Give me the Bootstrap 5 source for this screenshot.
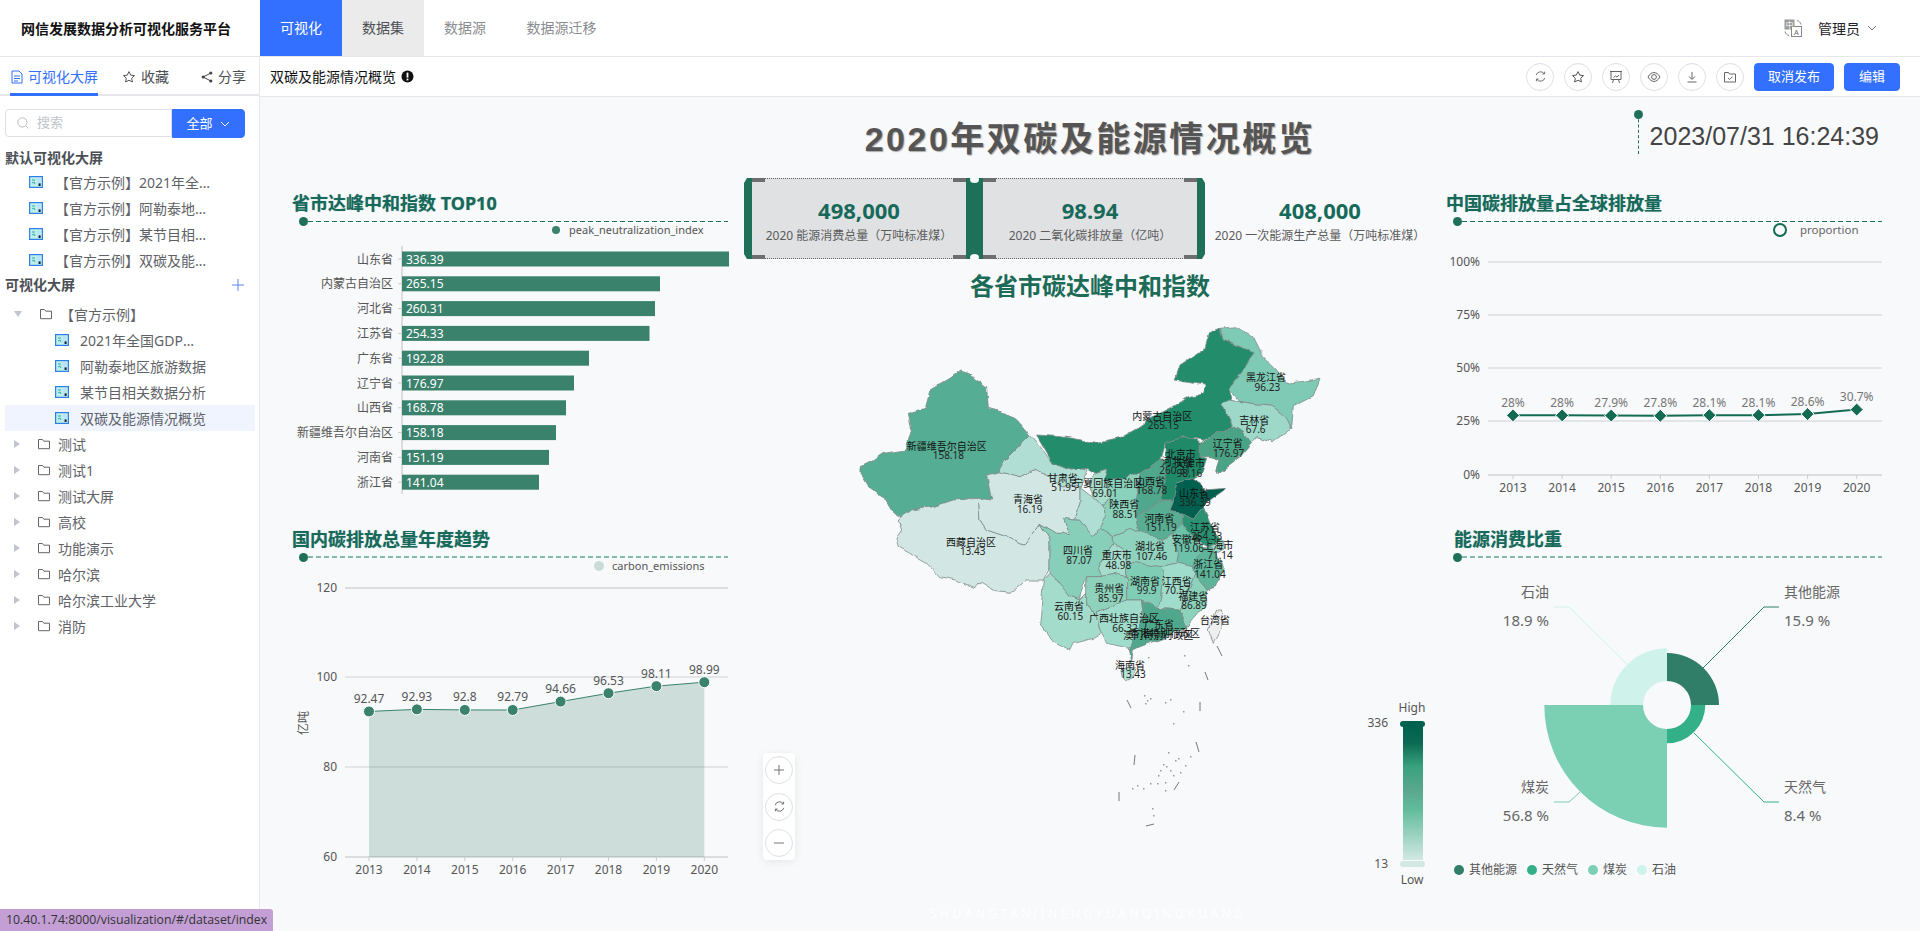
<!DOCTYPE html>
<html lang="zh-CN">
<head>
<meta charset="UTF-8">
<meta name="viewport" content="width=device-width, initial-scale=1">
<title>网信发展数据分析可视化服务平台</title>
<link href="https://cdn.jsdelivr.net/npm/bootstrap@5.3.0/dist/css/bootstrap.min.css" rel="stylesheet">
<style>
  html, body { height: 100%; overflow: hidden; }
  body { font-family: "Noto Sans", "Noto Sans CJK SC", sans-serif; font-size: 14px; color: #1f2329; background: #fff; }
  svg text { font-family: "Noto Sans", "Noto Sans CJK SC", sans-serif; }

  .topbar { height: 57px; border-bottom: 1px solid #e6e7eb; }
  .brand { width: 260px; padding-left: 21px; font-weight: 700; font-size: 14px; color: #111; white-space: nowrap; }
  .top-tab { width: 82px; height: 56px; line-height: 56px; text-align: center; color: #8a8d92; white-space: nowrap; }
  .top-tab.wide { width: 111px; }
  .top-tab.on { background: #3370ff; color: #fff; }
  .top-tab.soft { background: #ebebeb; color: #4b4f55; }
  .user-box { padding-right: 42px; gap: 16px; color: #1f2329; }
  .user-name { gap: 6px; }

  .work { height: 874px; }
  .side { width: 260px; flex: none; border-right: 1px solid #e6e7eb; overflow: hidden; }
  .side-tabs { height: 39px; border-bottom: 2px solid #e6e7eb; padding-left: 10px; }
  .side-tab { height: 39px; display: flex; align-items: center; gap: 5px; color: #4b4f55; white-space: nowrap; }
  .side-tab.on { color: #3370ff; border-bottom: 3px solid #3370ff; padding: 3px 0 0 1px; width: 88px; }
  .search-row { padding: 13px 0 0 5px; }
  .search-box { width: 167px; height: 28px; border: 1px solid #dcdfe6; border-radius: 4px 0 0 4px; color: #c0c4cc; padding-left: 11px; gap: 8px; font-size: 13px; }
  .search-btn { width: 73px; height: 29px; padding: 0; border-radius: 0 4px 4px 0; background: #3370ff; border-color: #3370ff; font-size: 13px; gap: 6px; }
  .group-name { padding-left: 5px; font-weight: 700; color: #4b4f55; }
  .group-a { height: 23px; line-height: 23px; margin-top: 8px; }
  .group-b { height: 20px; line-height: 20px; padding-right: 14px; margin-top: 2px; }
  .tree-row { height: 26px; display: flex; align-items: center; color: #5f6368; white-space: nowrap; }
  .tree-text { overflow: hidden; text-overflow: ellipsis; }
  .lv-default { padding-left: 29px; gap: 12px; }
  .lv-default .tree-text { width: 158px; }
  .lv-folder { padding-left: 14px; }
  .lv-folder .folder-ico { margin: 0 7px 0 17px; }
  .lv-child { padding-left: 55px; gap: 11px; margin-left: 0; }
  .lv-child .tree-text { max-width: 127px; }
  .tree-row.picked { background: #eff4ff; margin: 0 4px 0 5px; padding-left: 50px; }
  .tree-top { margin-top: 6px; }

  .sub-head { height: 40px; border-bottom: 1px solid #e6e7eb; padding: 0 20px 0 10px; }
  .sub-title { color: #111; gap: 5px; }
  .round-btn { width: 28px; height: 28px; border: 1px solid #dee0e6; border-radius: 50%; background: #fff; display: flex; align-items: center; justify-content: center; }
  .act-btn { height: 28px; padding: 0; font-size: 13px; border-radius: 4px; background: #3370ff; border-color: #3370ff; }

  .canvas { background: #f8f9fb; overflow: hidden; height: 834px; }
  .canvas-head { height: 81px; display: grid; grid-template-columns: 1fr auto 1fr; }
  .big-title { font-family: "Liberation Sans", "Noto Sans CJK SC", sans-serif; font-size: 34px; font-weight: 700; letter-spacing: 2.5px; color: #555; line-height: 42px; padding-top: 21px; text-shadow: 1px 1px 1px #aaa; white-space: nowrap; }
  .clock-box { justify-self: end; margin: 17px 41px 0 0; height: 40px; padding: 7px 0 0 11px; position: relative; border-left: 1px dashed #1f7058; font-family: "Liberation Sans", sans-serif; font-size: 25px; line-height: 30px; color: #444; white-space: nowrap; }
  .clock-box::before { content: ""; position: absolute; left: -5px; top: -4px; width: 9px; height: 9px; border-radius: 50%; background: #1f7058; }
  .board { display: grid; grid-template-columns: 480px 690px 490px; }
  .board svg { overflow: visible; }
  .pane-head { height: 35px; padding-top: 12px; box-sizing: content-box; }
  .pane-title { font-size: 18px; font-weight: 700; line-height: 26px; color: #17695a; white-space: nowrap; text-shadow: 0 0 1px rgba(23,105,90,.5); }
  .pane-rule { height: 8px; margin-top: 1px; display: flex; align-items: center; }
  .pane-rule i { width: 9px; height: 9px; border-radius: 50%; background: #1f7058; flex: none; }
  .pane-rule b { flex: 1; height: 1px; background: repeating-linear-gradient(90deg, #1f7058 0 5px, transparent 5px 8px); }
  .pane-rule.pale b { height: 2px; background: repeating-linear-gradient(90deg, #85b9a9 0 5px, transparent 5px 8px); }
  .col-l .pane-title { padding-left: 32px; }
  .col-l .pane-rule { margin-left: 39px; margin-right: 12px; }
  .col-r .pane-title { padding-left: 16px; }
  .col-r .pane-title.in { padding-left: 24px; }
  .col-r .pane-rule { margin-left: 23px; margin-right: 38px; }
  .pane-head.second { padding-top: 0; }
  .col-l svg, .col-r svg, .map-area svg.map-svg { display: block; }

  .ticket { display: flex; height: 81px; margin-left: 4px; }
  .tk-edge { flex: none; width: 8px; background: #1f7058; clip-path: polygon(3px 0, 100% 0, 100% 100%, 3px 100%, 0 calc(100% - 5px), 0 5px); }
  .tk-edge.right { clip-path: polygon(0 0, 5px 0, 100% 5px, 100% calc(100% - 5px), 5px 100%, 0 100%); }
  .tk-gap { flex: none; width: 17px; background: #1f7058; position: relative; }
  .tk-gap::before, .tk-gap::after { content: ""; position: absolute; left: 4px; width: 9px; height: 7px; background: #f8f9fb; border-radius: 50%; }
  .tk-gap::before { top: -2px; }
  .tk-gap::after { bottom: -2px; }
  .tk-cell { flex: none; width: 214px; text-align: center; position: relative; padding-top: 15px; }
  .tk-cell.fill { background: #e0e1e3; border-top: 1px dotted #666; border-bottom: 1px dotted #666; padding-top: 14px; }
  .tk-cell.fill::before, .tk-cell.fill::after { content: ""; position: absolute; top: -1px; height: 4px; width: 13px; left: 0; background: #6e6e6e; box-shadow: 201px 0 #6e6e6e; }
  .tk-cell.fill::after { top: auto; bottom: -1px; }
  .tk-cell.last { width: 230px; }
  .tk-num { font-size: 22px; font-weight: 700; line-height: 34px; color: #17695a; }
  .tk-lab { font-size: 12px; line-height: 18px; color: #5b5b5b; white-space: nowrap; }
  .map-title { font-size: 24px; font-weight: 700; line-height: 32px; margin-top: 11px; padding-left: 10px; text-align: center; color: #1b6b56; }
  .map-area { position: relative; height: 629px; }
  .zoom-tool { position: absolute; left: 23px; top: 451px; width: 32px; height: 107px; border-radius: 4px; background: #fff; box-shadow: 0 2px 8px rgba(0,0,0,.08); display: flex; flex-direction: column; align-items: center; justify-content: space-between; padding: 3px 0; }
  .addr-tip { position: absolute; left: 0; bottom: 0; height: 22px; line-height: 22px; padding: 0 6px; background: #c39fd6; color: #333; font-family: "Open Sans", sans-serif; font-size: 12.3px; border-radius: 0 3px 0 0; white-space: nowrap; }
</style>
</head>
<body class="position-relative">

<svg width="0" height="0" class="position-absolute">
  <symbol id="ic-folder" viewBox="0 0 14 14"><path d="M1.5 2.5h4l1.3 1.7h5.7v7.5h-11z" fill="none" stroke="#666" stroke-width="1"/></symbol>
  <symbol id="ic-screen" viewBox="0 0 14 12"><rect x=".6" y=".6" width="12.8" height="10.8" fill="#bdeee9" stroke="#2f7fe8" stroke-width="1.2"/><path d="M3 4h3M3 7l2-1 1 2" stroke="#3aa" fill="none"/><rect x="8" y="2" width="3.6" height="8" fill="#b9e4f7"/><rect x="9.6" y="7.4" width="2" height="2.6" fill="#123"/></symbol>
  <symbol id="ic-sync" viewBox="0 0 14 14"><path d="M2.4 5.5A4.8 4.8 0 0 1 11 4M11.6 8.5A4.8 4.8 0 0 1 3 10M11.4 1.8V4.2H9M2.6 12.2V9.8H5" fill="none" stroke="#666" stroke-width="1"/></symbol>
  <symbol id="ic-star" viewBox="0 0 14 14"><path d="M7 1.6l1.7 3.5 3.8.5-2.8 2.6.7 3.8L7 10.2 3.6 12l.7-3.8L1.5 5.6l3.8-.5z" fill="none" stroke="#555" stroke-width="1"/></symbol>
  <symbol id="ic-plus" viewBox="0 0 14 14"><path d="M7 2v10M2 7h10" stroke="#777" fill="none"/></symbol>
  <symbol id="ic-minus" viewBox="0 0 14 14"><path d="M2 7h10" stroke="#777" fill="none"/></symbol>
  <symbol id="ic-down" viewBox="0 0 12 12"><path d="M2 4l4 4 4-4" fill="none" stroke="currentColor" stroke-width="1"/></symbol>
</svg>

<header class="topbar d-flex align-items-center">
  <div class="brand">网信发展数据分析可视化服务平台</div>
  <div class="top-tab on">可视化</div>
  <div class="top-tab soft">数据集</div>
  <div class="top-tab">数据源</div>
  <div class="top-tab wide">数据源迁移</div>
  <div class="user-box ms-auto d-flex align-items-center">
    <svg width="18" height="18" viewBox="0 0 18 18"><rect x="0.500" y="0.500" width="10" height="10" fill="#9a9a9a"/><rect x="7.500" y="7.500" width="10" height="10" fill="#fff" stroke="#888"/><text x="5.500" y="8.500" font-size="8" fill="#fff" text-anchor="middle">中</text><text x="12.500" y="15.800" font-size="7.500" fill="#666" text-anchor="middle">A</text><path d="M13 1.500c2 .5 3.500 2 4 4M1 12.500c.5 2 2 3.500 4 4" fill="none" stroke="#888"/></svg>
    <span class="user-name d-flex align-items-center">管理员 <svg width="12" height="12" class="text-secondary"><use href="#ic-down"/></svg></span>
  </div>
</header>

<div class="work d-flex">
  <aside class="side">
    <div class="side-tabs d-flex">
      <div class="side-tab on">
        <svg width="12" height="14" viewBox="0 0 12 14"><path d="M1 1h7l3 3v9H1zM3 6h6M3 8.5h6M3 11h4" fill="none" stroke="#3370ff"/></svg>
        可视化大屏</div>
      <div class="side-tab ms-4"><svg width="14" height="14"><use href="#ic-star"/></svg>收藏</div>
      <div class="side-tab ms-4 ps-2"><svg width="12" height="12" viewBox="0 0 12 12"><circle cx="2.2" cy="6" r="1.6" fill="#444"/><circle cx="9.8" cy="2" r="1.6" fill="#444"/><circle cx="9.8" cy="10" r="1.6" fill="#444"/><path d="M2.2 6l7.6-4M2.2 6l7.6 4" stroke="#444"/></svg>分享</div>
    </div>
    <div class="search-row d-flex">
      <div class="search-box d-flex align-items-center">
        <svg width="12" height="12" viewBox="0 0 12 12"><circle cx="5.4" cy="5.4" r="4.6" fill="none" stroke="#bbb"/><path d="M9 9l2.4 2.4" stroke="#bbb"/></svg>搜索</div>
      <button class="btn btn-primary search-btn d-flex align-items-center justify-content-center">全部 <svg width="12" height="12"><use href="#ic-down"/></svg></button>
    </div>
    <div class="group-name group-a">默认可视化大屏</div>
    <div id="defaultList"></div>
    <div class="group-name group-b d-flex justify-content-between align-items-center">可视化大屏 <svg width="14" height="14" viewBox="0 0 14 14"><path d="M7 1v12M1 7h12" stroke="#5b86f0" fill="none"/></svg></div>
    <div id="treeList" class="tree-top"></div>
  </aside>

  <main class="flex-grow-1">
    <div class="sub-head d-flex align-items-center">
      <div class="sub-title d-flex align-items-center">双碳及能源情况概览
        <svg width="13" height="13" viewBox="0 0 13 13"><circle cx="6.5" cy="6.5" r="6" fill="#111"/><rect x="5.6" y="2.6" width="1.8" height="5" fill="#fff"/><rect x="5.6" y="8.6" width="1.8" height="1.8" fill="#fff"/></svg>
      </div>
      <div class="ms-auto d-flex align-items-center">
        <div class="d-flex" style="gap:10px">
          <div class="round-btn"><svg width="13" height="13"><use href="#ic-sync"/></svg></div>
          <div class="round-btn"><svg width="14" height="14"><use href="#ic-star"/></svg></div>
          <div class="round-btn"><svg width="14" height="14" viewBox="0 0 14 14"><path d="M1 1.500h12M2 1.500v8h10v-8M4.500 9.500l-1 3.500M9.500 9.500l1 3.500M4.500 7.500l2-1.500 1.500 1 2-2" fill="none" stroke="#666"/></svg></div>
          <div class="round-btn"><svg width="14" height="14" viewBox="0 0 14 14"><path d="M1 7c2-3.400 4-4.400 6-4.400S11 3.600 13 7c-2 3.400-4 4.400-6 4.400S3 10.400 1 7z" fill="none" stroke="#666"/><circle cx="7" cy="7" r="2.400" fill="none" stroke="#666"/></svg></div>
          <div class="round-btn"><svg width="14" height="14" viewBox="0 0 14 14"><path d="M7 2v7M4 6.500l3 3 3-3M2.500 12h9" fill="none" stroke="#666"/></svg></div>
          <div class="round-btn"><svg width="14" height="14" viewBox="0 0 14 14"><path d="M1.500 2.500h4l1 1.500h6v8h-11z" fill="none" stroke="#666"/><path d="M5 8l1.500 1.500L9.500 6.800" fill="none" stroke="#666"/></svg></div>
        </div>
        <button class="btn btn-primary act-btn" style="width:80px;margin-left:10px">取消发布</button>
        <button class="btn btn-primary act-btn" style="width:56px;margin-left:10px">编辑</button>
      </div>
    </div>

    <div class="canvas">
      <div class="canvas-head">
        <div></div>
        <div class="big-title">2020年双碳及能源情况概览</div>
        <div class="clock-box">2023/07/31 16:24:39</div>
      </div>
      <div class="board">
        <section class="col-l">
          <div class="pane-head">
            <div class="pane-title">省市达峰中和指数 TOP10</div>
            <div class="pane-rule"><i></i><b></b></div>
          </div>
          <svg id="barChart" width="480" height="301" viewBox="260 225 480 301"></svg>
          <div class="pane-head second">
            <div class="pane-title">国内碳排放总量年度趋势</div>
            <div class="pane-rule pale"><i></i><b></b></div>
          </div>
          <svg id="areaChart" width="480" height="340" viewBox="260 561 480 340"></svg>
        </section>

        <section>
          <div class="ticket">
            <div class="tk-edge"></div>
            <div class="tk-cell fill"><div class="tk-num">498,000</div><div class="tk-lab">2020 能源消费总量（万吨标准煤）</div></div>
            <div class="tk-gap"></div>
            <div class="tk-cell fill"><div class="tk-num">98.94</div><div class="tk-lab">2020 二氧化碳排放量（亿吨）</div></div>
            <div class="tk-edge right"></div>
            <div class="tk-cell last"><div class="tk-num">408,000</div><div class="tk-lab">2020 一次能源生产总量（万吨标准煤）</div></div>
          </div>
          <div class="map-title">各省市碳达峰中和指数</div>
          <div class="map-area">
            <svg id="mapChart" class="map-svg" width="690" height="629" viewBox="740 302 690 629"></svg>
            <div class="zoom-tool">
              <div class="round-btn"><svg width="14" height="14"><use href="#ic-plus"/></svg></div>
              <div class="round-btn"><svg width="13" height="13"><use href="#ic-sync"/></svg></div>
              <div class="round-btn"><svg width="14" height="14"><use href="#ic-minus"/></svg></div>
            </div>
          </div>
        </section>

        <section class="col-r">
          <div class="pane-head">
            <div class="pane-title">中国碳排放量占全球排放量</div>
            <div class="pane-rule"><i></i><b></b></div>
          </div>
          <svg id="shareChart" width="490" height="301" viewBox="1430 225 490 301"></svg>
          <div class="pane-head second">
            <div class="pane-title in">能源消费比重</div>
            <div class="pane-rule pale"><i></i><b></b></div>
          </div>
          <svg id="roseChart" width="490" height="340" viewBox="1430 561 490 340"></svg>
        </section>
      </div>
    </div>
  </main>
</div>

<div class="addr-tip">10.40.1.74:8000/visualization/#/dataset/index</div>

<script>
  // 左侧目录
  const screenIco = '<svg width="14" height="12" class="flex-none"><use href="#ic-screen"/></svg>';
  const folderIco = '<svg width="14" height="14" class="folder-ico flex-none"><use href="#ic-folder"/></svg>';
  const arrowRight = '<svg width="6" height="8" viewBox="0 0 6 8"><path d="M0 0l6 4-6 4z" fill="#c0c4cc"/></svg>';
  const arrowDown = '<svg width="8" height="6" viewBox="0 0 8 6"><path d="M0 0h8L4 6z" fill="#c0c4cc"/></svg>';

  document.getElementById('defaultList').innerHTML = ['2021年全国GDP数据', '阿勒泰地区旅游数据', '某节目相关数据分析', '双碳及能源情况概览']
    .map(t => `<div class="tree-row lv-default">${screenIco}<span class="tree-text">【官方示例】${t}</span></div>`).join('');

  const folderRow = (t, open) => `<div class="tree-row lv-folder">${open ? arrowDown : arrowRight}${folderIco}<span>${t}</span></div>`;
  const childRow = (t, on) => `<div class="tree-row lv-child ${on ? 'picked' : ''}">${screenIco}<span class="tree-text">${t}</span></div>`;
  document.getElementById('treeList').innerHTML = folderRow('【官方示例】', true)
    + ['2021年全国GDP数据', '阿勒泰地区旅游数据', '某节目相关数据分析'].map(t => childRow(t)).join('')
    + childRow('双碳及能源情况概览', true)
    + ['测试', '测试1', '测试大屏', '高校', '功能演示', '哈尔滨', '哈尔滨工业大学', '消防'].map(t => folderRow(t)).join('');

  // svg 小工具
  const txt = (x, y, s, size, fill, anchor, extra) =>
    `<text x="${x}" y="${y}" font-size="${size}" fill="${fill}" text-anchor="${anchor || 'start'}" dominant-baseline="central" ${extra || ''}>${s}</text>`;
  const ln = (x1, y1, x2, y2, c, w) => `<line x1="${x1}" y1="${y1}" x2="${x2}" y2="${y2}" stroke="${c}" stroke-width="${w || 1}"/>`;

  // 柱状图
  const bars = [['山东省', 336.39, 729], ['内蒙古自治区', 265.15, 660], ['河北省', 260.31, 655], ['江苏省', 254.33, 649.500], ['广东省', 192.28, 589],
    ['辽宁省', 176.97, 574], ['山西省', 168.78, 566], ['新疆维吾尔自治区', 158.18, 556], ['河南省', 151.19, 549], ['浙江省', 141.04, 539]];
  let h = `<circle cx="556" cy="230" r="4" fill="#3a826c"/>` + txt(569, 229, 'peak_neutralization_index', 11, '#555');
  h += ln(402, 246, 402, 494, '#dcdcdc', 2);
  bars.forEach((b, i) => {
    const y = 259 + i * 24.8;
    h += ln(398, y, 402, y, '#ccc');
    h += txt(393, y, b[0], 12, '#555', 'end');
    h += `<rect x="402" y="${y - 7.5}" width="${b[2] - 402}" height="15" fill="#3a826c"/>`;
    h += txt(406, y, b[1], 12, '#fff');
  });
  document.getElementById('barChart').innerHTML = h;

  // 面积折线图
  const years = [2013, 2014, 2015, 2016, 2017, 2018, 2019, 2020];
  const carbon = [92.47, 92.93, 92.8, 92.79, 94.66, 96.53, 98.11, 98.99];
  const ax = i => 369 + i * 47.9, ay = v => 857 - (v - 60) / 60 * 269;
  h = `<circle cx="599" cy="566" r="5" fill="#cbdcd8"/>` + txt(612, 565, 'carbon_emissions', 11, '#555');
  [[120, 588], [100, 677], [80, 767], [60, 857]].forEach(t => {
    h += ln(345, t[1], 728, t[1], t[0] === 120 || t[0] === 60 ? '#dcdde0' : '#cfd1d3', t[0] === 100 || t[0] === 80 ? 1 : 2);
    h += txt(337, t[1] - 1, t[0], 12, '#555', 'end');
  });
  const pts = carbon.map((v, i) => ax(i) + ',' + ay(v)).join(' ');
  h += `<polygon points="${ax(0)},857 ${pts} ${ax(7)},857" fill="#1f7058" fill-opacity=".2"/>`;
  h += `<polyline points="${pts}" fill="none" stroke="#3a826c" stroke-width="1"/>`;
  carbon.forEach((v, i) => {
    h += `<circle cx="${ax(i)}" cy="${ay(v)}" r="5.500" fill="#3a826c" stroke="#fff"/>`;
    h += txt(ax(i), ay(v) - 13, v, 12, '#555', 'middle');
    h += ln(ax(i), 857, ax(i), 861, '#ccc');
    h += txt(ax(i), 869, years[i], 12, '#555', 'middle');
  });
  h += txt(303, 723, '亿吨', 12, '#555', 'middle', 'transform="rotate(-90 303 723)"');
  document.getElementById('areaChart').innerHTML = h;

  // 占比折线图
  const share = [28, 28, 27.9, 27.8, 28.1, 28.1, 28.6, 30.7];
  const sx = i => 1513 + i * 49.1, sy = v => 475 - v * 2.13;
  h = `<circle cx="1780" cy="230" r="6" fill="none" stroke="#136b53" stroke-width="2"/>` + txt(1800, 229, 'proportion', 11.5, '#666');
  [[100, 262], [75, 315], [50, 368], [25, 421], [0, 475]].forEach(t => {
    h += ln(1488, t[1], 1882, t[1], t[0] === 50 ? '#cfd1d6' : '#dcdde0', t[0] === 50 ? 1 : (t[0] === 0 ? 2 : 1.500));
    h += txt(1480, t[1] - 1, t[0] + '%', 12, '#555', 'end');
  });
  h += `<polyline points="${share.map((v, i) => sx(i) + ',' + sy(v)).join(' ')}" fill="none" stroke="#136b53" stroke-width="2"/>`;
  share.forEach((v, i) => {
    const x = sx(i), y = sy(v);
    h += `<polygon points="${x},${y - 6.500} ${x + 6.500},${y} ${x},${y + 6.500} ${x - 6.500},${y}" fill="#136b53" stroke="#fff"/>`;
    h += txt(x, y - 13, v + '%', 12, '#777', 'middle');
    h += ln(x, 475, x, 479, '#ccc');
    h += txt(x, 487, years[i], 12, '#555', 'middle');
  });
  document.getElementById('shareChart').innerHTML = h;

  // 南丁格尔玫瑰图
  const cx = 1667, cy = 705, inner = 24;
  const sector = (r, q, c) => {
    const d = [[0, -1, 1, 0], [1, 0, 0, 1], [0, 1, -1, 0], [-1, 0, 0, -1]][q];
    return `<path d="M${cx + d[0] * r} ${cy + d[1] * r}A${r} ${r} 0 0 1 ${cx + d[2] * r} ${cy + d[3] * r}L${cx + d[2] * inner} ${cy + d[3] * inner}A${inner} ${inner} 0 0 0 ${cx + d[0] * inner} ${cy + d[1] * inner}Z" fill="${c}"/>`;
  };
  h = sector(52, 0, '#307e68') + sector(38.300, 1, '#34b088') + sector(122.700, 2, '#7bcfb2') + sector(56.700, 3, '#cff3ea');
  const leader = (p, c) => `<polyline points="${p}" fill="none" stroke="${c}"/>`;
  h += leader('1703,668 1764,607 1779,607', '#307e68') + leader('1694,733 1764,802 1779,802', '#34b088')
    + leader('1580,792 1569,802 1554,802', '#7bcfb2') + leader('1627,664 1569,607 1554,607', '#cff3ea');
  [[1549, 591, '石油', '18.9 %', 'end'], [1784, 591, '其他能源', '15.9 %', 'start'], [1549, 786, '煤炭', '56.8 %', 'end'], [1784, 786, '天然气', '8.4 %', 'start']]
    .forEach(l => { h += txt(l[0], l[1], l[2], 14, '#666', l[4]) + txt(l[0], l[1] + 29, l[3], 15, '#666', l[4]); });
  [[1459, '#307e68', '其他能源'], [1532, '#34b088', '天然气'], [1593, '#7bcfb2', '煤炭'], [1642, '#cff3ea', '石油']]
    .forEach(l => { h += `<circle cx="${l[0]}" cy="870" r="5" fill="${l[1]}"/>` + txt(l[0] + 10, 869, l[2], 12, '#555'); });
  document.getElementById('roseChart').innerHTML = h;

  // 中国地图，坐标按参考图描出来的，原点 (840,310)，放大 3 倍
  const provinces = [
    ['#55ae93', '60,470 100,450 130,430 195,420 215,360 205,310 255,295 270,240 330,205 360,183 385,190 440,230 445,295 500,310 540,340 570,375 545,400 490,455 480,485 440,495 455,570 400,565 340,570 280,590 215,600 185,625 160,610 130,560 85,530 60,490'],
    ['#d2e7e3', '175,630 215,600 280,590 340,570 415,565 420,630 440,660 500,680 550,705 600,640 630,690 630,770 610,810 560,810 510,850 470,845 420,815 405,835 350,810 300,800 260,760 175,710 168,685 185,660'],
    ['#d2e7e3', '415,565 455,570 440,495 480,485 540,500 580,480 630,500 670,530 720,530 720,580 700,630 670,625 690,670 650,670 600,640 550,705 500,680 440,660 420,630'],
    ['#b0ded4', '570,375 600,410 640,460 690,480 745,475 720,530 760,560 790,590 800,620 785,650 760,680 715,630 700,630 720,580 720,530 670,530 630,500 580,480 540,500 480,485 490,455 545,400'],
    ['#228c6b', '590,375 660,380 700,385 770,400 840,385 900,350 940,320 1000,290 1040,265 1090,250 1100,225 1060,220 1005,210 1020,165 1090,120 1105,70 1140,55 1150,90 1200,110 1240,125 1215,175 1165,235 1175,275 1145,280 1180,350 1130,370 1090,390 1060,385 1030,380 975,400 960,450 900,490 870,490 850,510 790,510 800,480 770,490 745,475 690,480 640,460'],
    ['#7ecab4', '1140,55 1190,50 1240,80 1270,140 1310,180 1340,220 1380,215 1440,205 1420,260 1360,290 1355,355 1340,325 1300,290 1200,275 1165,235 1215,175 1240,125 1200,110 1150,90'],
    ['#9dd8c8', '1145,280 1165,270 1200,275 1300,290 1340,325 1355,355 1300,395 1250,380 1235,395 1205,365 1180,350'],
    ['#4ba385', '1180,350 1205,365 1235,400 1200,440 1135,490 1130,480 1140,450 1110,440 1080,440 1080,400 1130,370'],
    ['#1f8968', '975,400 1030,380 1060,385 1080,400 1080,440 1100,445 1085,490 1060,505 1010,520 1000,570 960,570 975,520 975,450'],
    ['#50a88c', '900,490 960,450 975,450 975,520 960,570 890,620 890,560'],
    ['#a8dccd', '770,490 800,480 790,510 810,560 790,590 760,560 745,520'],
    ['#8ad2bb', '870,490 900,490 890,560 890,620 900,660 870,660 820,680 780,655 800,620 790,590 810,560 790,510 850,510'],
    ['#005f4e', '1010,520 1060,505 1085,520 1090,540 1160,535 1110,570 1090,590 1060,625 1030,610 990,605 1000,570'],
    ['#58ad92', '960,570 1000,570 990,605 1030,610 1030,640 1000,670 960,690 900,665 890,620'],
    ['#2b9171', '1030,610 1060,625 1090,590 1110,640 1145,690 1110,710 1070,690 1040,660 1030,640'],
    ['#6cc2a8', '1030,640 1040,660 1070,690 1090,710 1060,770 1010,760 1015,730 995,680 1000,670'],
    ['#9fdbc9', '1110,710 1145,690 1155,715 1130,730'],
    ['#5db498', '1090,710 1110,710 1130,730 1150,770 1130,830 1100,840 1065,790 1060,770'],
    ['#8fd2bd', '870,660 900,660 960,690 1000,670 995,680 1015,730 1010,760 960,770 860,755 850,720 820,700 820,680'],
    ['#a6dccc', '775,775 790,740 820,700 850,720 860,755 860,800 820,790 785,800'],
    ['#87cfb8', '600,640 650,670 690,670 670,625 700,630 715,630 760,680 780,655 820,680 820,700 790,740 775,775 785,800 740,800 720,870 690,860 650,810 630,790 630,690'],
    ['#a4dccc', '630,790 650,810 690,860 720,870 740,850 740,880 770,920 780,960 800,960 760,985 700,1000 690,1020 635,990 600,940 610,810'],
    ['#8ed2bc', '740,800 785,800 820,790 860,800 860,870 810,890 770,905 770,920 740,880 740,850'],
    ['#7fcdb4', '860,755 960,770 970,790 965,870 950,895 905,870 860,870 860,800'],
    ['#a0dccb', '960,770 1010,760 1060,770 1065,790 1050,830 1020,900 950,895 965,870 970,790'],
    ['#8cd2bb', '1065,790 1100,840 1100,880 1040,950 1020,900 1050,830'],
    ['#a0dccb', '770,920 770,905 810,890 860,870 905,870 910,920 890,970 870,1015 800,1000 780,960'],
    ['#50a88c', '905,870 950,895 1020,900 1040,950 970,985 900,1010 880,1020 875,1050 868,1020 890,970 910,920'],
    ['#b4e0d5', '843,1080 870,1072 887,1078 880,1102 860,1112 846,1100'],
    ['#eeeeee', '1130,900 1145,900 1145,950 1120,1000 1105,960']
  ];
  const labels = [
    ['新疆维吾尔自治区', 320, 407, '158.18', 325, 435], ['内蒙古自治区', 967, 317, '265.15', 970, 345], ['黑龙江省', 1278, 201, '96.23', 1282, 231],
    ['吉林省', 1243, 330, '67.6', 1247, 357], ['辽宁省', 1163, 400, '176.97', 1166, 428], ['北京市', 1022, 433, '', 0, 0],
    ['河北省', 1010, 453, '260.31', 1005, 480], ['天津市', 1050, 460, '98.16', 1048, 490], ['山西省', 930, 513, '168.78', 935, 540],
    ['山东省', 1062, 548, '336.39', 1065, 576], ['甘肃省', 668, 503, '51.95', 672, 531], ['宁夏回族自治区', 805, 519, '69.01', 795, 548],
    ['青海省', 564, 568, '16.19', 569, 596], ['陕西省', 853, 583, '88.51', 856, 612], ['河南省', 958, 623, '151.19', 963, 652],
    ['江苏省', 1095, 650, '254.33', 1100, 678], ['安徽省', 1040, 686, '119.06', 1045, 714], ['上海市', 1135, 706, '71.14', 1140, 736],
    ['西藏自治区', 393, 695, '13.43', 398, 723], ['四川省', 714, 721, '87.07', 717, 750], ['重庆市', 830, 736, '48.98', 835, 765],
    ['湖北省', 930, 709, '107.46', 935, 738], ['浙江省', 1105, 763, '141.04', 1110, 792], ['湖南省', 915, 812, '99.9', 920, 840],
    ['江西省', 1010, 812, '70.57', 1012, 840], ['贵州省', 808, 835, '85.97', 812, 864], ['福建省', 1060, 857, '86.89', 1062, 885],
    ['云南省', 687, 889, '60.15', 691, 918], ['广西壮族自治区', 852, 925, '66.32', 855, 953], ['广东省', 957, 942, '', 0, 0],
    ['香港特别行政区', 975, 968, '', 0, 0], ['澳门特别行政区', 955, 974, '', 0, 0], ['台湾省', 1125, 930, '', 0, 0],
    ['海南省', 870, 1064, '13.43', 879, 1092]
  ];
  const mx = v => 840 + v / 3, my = v => 310 + v / 3;
  // 轮廓描得比较粗，加一点扰动让边界不那么直
  h = `<defs><filter id="rough" x="-5%" y="-5%" width="110%" height="110%" color-interpolation-filters="sRGB"><feTurbulence type="fractalNoise" baseFrequency=".09" numOctaves="2" seed="4"/><feDisplacementMap in="SourceGraphic" scale="5" xChannelSelector="R" yChannelSelector="G"/></filter></defs>`;
  h += '<g filter="url(#rough)">' + provinces.map(p => `<polygon points="${p[1].split(' ').map(q => { const a = q.split(','); return mx(+a[0]) + ',' + my(+a[1]); }).join(' ')}" fill="${p[0]}" stroke="#7f8a87" stroke-width=".8" stroke-linejoin="round"/>`).join('') + '</g>';
  labels.forEach(l => {
    h += txt(mx(l[1]), my(l[2]), l[0], 10, '#111', 'middle');
    if (l[3]) h += txt(mx(l[4]), my(l[5]), l[3], 10, '#222', 'middle');
  });
  // 南海诸岛的断续线和小岛
  [[1217, 646, 1222, 656], [1205, 672, 1208, 680], [1127, 700, 1131, 708], [1200, 702, 1200, 711], [1135, 755, 1134, 765], [1196, 742, 1199, 752], [1174, 790, 1179, 782], [1119, 792, 1119, 801], [1146, 826, 1154, 824]]
    .forEach(d => { h += ln(d[0], d[1], d[2], d[3], '#777'); });
  [[1144, 695], [1147, 700], [1150, 698], [1145, 703], [1165, 702], [1170, 699], [1183, 711], [1173, 723], [1168, 752], [1175, 760], [1160, 770], [1185, 765], [1158, 775], [1165, 782], [1173, 775], [1150, 783], [1143, 788], [1165, 790], [1152, 808], [1153, 815], [1178, 758], [1190, 756], [1148, 657], [1184, 655], [1188, 665], [1170, 770], [1180, 772], [1166, 766], [1157, 783], [1132, 788], [1137, 785], [1163, 764]]
    .forEach(d => { h += `<rect x="${d[0]}" y="${d[1]}" width="1.500" height="1.500" fill="#999"/>`; });
  // 图例
  h += `<defs><linearGradient id="vmGrad" x1="0" y1="0" x2="0" y2="1"><stop offset="0" stop-color="#00624e"/><stop offset=".12" stop-color="#0b6a53"/><stop offset=".3" stop-color="#3aa27e"/><stop offset=".48" stop-color="#5aa88e"/><stop offset=".62" stop-color="#62bc9c"/><stop offset="1" stop-color="#d2e8e3"/></linearGradient></defs>`;
  h += `<rect x="1403" y="727" width="20" height="133" fill="url(#vmGrad)"/>`;
  h += `<rect x="1400" y="721" width="25" height="6" rx="3" fill="#00624e"/><rect x="1400" y="861" width="25" height="6" rx="3" fill="#d2e8e3"/>`;
  h += txt(1412, 707, 'High', 12, '#555', 'middle') + txt(1412, 879, 'Low', 12, '#555', 'middle');
  h += txt(1388, 722, '336', 12, '#555', 'end') + txt(1388, 863, '13', 12, '#555', 'end');
  h += txt(930, 913, 'SHUANGTANJINENGYUANQINGKUANG', 12, '#fff', 'start', 'letter-spacing="3.500"');
  document.getElementById('mapChart').innerHTML = h;
</script>
<script src="https://cdn.jsdelivr.net/npm/bootstrap@5.3.0/dist/js/bootstrap.bundle.min.js"></script>
</body>
</html>
